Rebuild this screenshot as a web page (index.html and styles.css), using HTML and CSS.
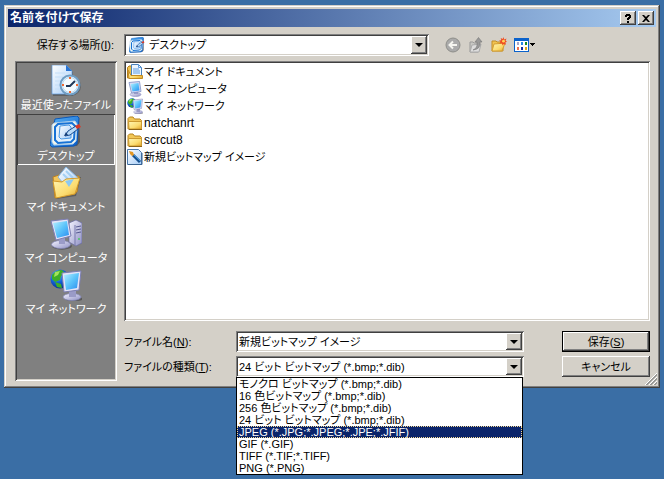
FILE: index.html
```html
<!DOCTYPE html>
<html lang="ja">
<head>
<meta charset="utf-8">
<title>名前を付けて保存</title>
<link rel="stylesheet" href="styles.css">
</head>
<body>
<svg class="defs" width="0" height="0" aria-hidden="true">
  <defs>
    <linearGradient id="screen" x1="0" y1="0" x2="1" y2="1"><stop offset="0" stop-color="#b8f0ff"/><stop offset=".5" stop-color="#5cc4fa"/><stop offset="1" stop-color="#2a8cf0"/></linearGradient>
    <linearGradient id="case" x1="0" y1="0" x2="1" y2="1"><stop offset="0" stop-color="#f4f4ff"/><stop offset="1" stop-color="#8f90c4"/></linearGradient>
    <linearGradient id="gold" x1="0" y1="0" x2="1" y2="1"><stop offset="0" stop-color="#fff6b4"/><stop offset=".6" stop-color="#fbdc70"/><stop offset="1" stop-color="#e2a52c"/></linearGradient>
    <linearGradient id="blue" x1="0" y1="0" x2="1" y2="1"><stop offset="0" stop-color="#58b4f8"/><stop offset="1" stop-color="#0a5cc8"/></linearGradient>
    <linearGradient id="paper" x1="0" y1="0" x2="1" y2="1"><stop offset="0" stop-color="#ffffff"/><stop offset="1" stop-color="#a4ccf8"/></linearGradient>
    <radialGradient id="globe" cx=".35" cy=".3" r=".75"><stop offset="0" stop-color="#6cc8ff"/><stop offset=".5" stop-color="#1464dc"/><stop offset="1" stop-color="#062c88"/></radialGradient>
  </defs>
  <symbol id="recent" viewBox="0 0 32 32">
    <path d="M3 1h14l6 6v24H3z" fill="#444" opacity=".5"/>
    <path d="M2 0h14l6 6v23H2z" fill="url(#paper)" stroke="#5d98dc" stroke-width=".7"/>
    <path d="M16 0v6h6z" fill="#2874d4"/>
    <path d="M5 8h10M5 12h8M5 16h6M5 20h5M5 24h6" stroke="#c4def8"/>
    <circle cx="21" cy="21" r="10" fill="#555" opacity=".7"/>
    <circle cx="20" cy="20" r="9.5" fill="#e4f4ff" stroke="#6f9dc4" stroke-width="2"/>
    <circle cx="20" cy="20" r="7.5" fill="#f4fbff" stroke="#b8d8f0"/>
    <path d="M20 12v2M20 26v2M12 20h2M26 20h2" stroke="#f06830" stroke-width="2"/>
    <path d="M16 21h4l5-5" fill="none" stroke="#203858" stroke-width="2"/>
  </symbol>
  <symbol id="desktop" viewBox="0 0 32 32">
    <path d="M4 5 29 2l1 24-3 4-23 1-3-3z" fill="#333" opacity=".5"/>
    <path d="M5 3 27 0l2 2-2 26-3 2-22 1-2-2z" fill="url(#blue)" stroke="#0b58b8"/>
    <path d="M4 7 25 5l2 3-1 17-3 3-19 1-2-3V9z" fill="#f4f6ec" stroke="#a8ccec"/>
    <path d="M8 8 22 7l3 3-1 13-3 3-13 1-3-3V11z" fill="#e2f0fc" stroke="#1672d6" stroke-width="2"/>
    <path d="M10 10l9-1 2 2v11l-10 1-2-2z" fill="url(#paper)" stroke="#4a98e4"/>
    <path d="M15 20l3-5 8-5 2 3-8 6z" fill="#b8daf8" stroke="#184c90"/>
    <path d="M25 10l4-2 2 3-4 2z" fill="#d83828"/><path d="M14 20l2-4 2 3z" fill="#153e78"/>
  </symbol>
  <symbol id="documents" viewBox="0 0 32 32">
    <path d="M4 11 31 10l-5 19-20 3z" fill="#333" opacity=".45"/>
    <path d="M3 10 9 8l4 2 16-1-2 16-22 6z" fill="#f3c65b" stroke="#ba8022"/>
    <path d="M16 0 28 11 18 22 8 10z" fill="url(#paper)" stroke="#86b7e4"/>
    <path d="M16 4l7 7M13 7l7 7" stroke="#a4d0f4" stroke-width="2"/>
    <path d="M3 14 12 15l4-3 14-1-5 16-19 4z" fill="url(#gold)" stroke="#d39a2a"/>
    <path d="M15 14l9-2-5 8z" fill="#8bc8f3"/>
  </symbol>
  <symbol id="computer" viewBox="0 0 32 32">
    <path d="M19 5l7-3 6 3v20l-6 3-7-4z" fill="url(#case)" stroke="#6668a0" stroke-width=".7"/>
    <path d="M25 7v20" stroke="#7678ad"/><path d="M26 9l5-1M26 12l5-1M26 15l5-1" stroke="#575b91"/><circle cx="29" cy="21" r="1" fill="#4bc861"/>
    <ellipse cx="12" cy="28" rx="10" ry="3.7" fill="#333" opacity=".5"/>
    <ellipse cx="11" cy="26.500" rx="9.500" ry="4" fill="url(#case)" stroke="#8385b6" stroke-width=".7"/>
    <path d="M9 20h6v6H9z" fill="#9a9bc7"/>
    <path d="M1 3 18 1l3 17-15 4z" fill="#e4e3f7" stroke="#7c7eb2"/>
    <path d="M3 5 17 3l2 14-12 3z" fill="url(#screen)"/>
  </symbol>
  <symbol id="monitor" viewBox="0 0 16 16">
    <ellipse cx="8.500" cy="13.500" rx="5.500" ry="2" fill="url(#case)" stroke="#8385b6" stroke-width=".5"/>
    <path d="M7 10h4v3H7z" fill="#9a9bc7"/>
    <path d="M2 1.500 12.500.5l1.500 10-9.500 1.500z" fill="#dcdcf4" stroke="#7c8ec2" stroke-width=".8"/>
    <path d="M3.500 3 11.500 2l1 7.500-7 1z" fill="url(#screen)"/>
  </symbol>
  <symbol id="network" viewBox="0 0 32 32">
    <circle cx="10" cy="10" r="9.500" fill="url(#globe)"/>
    <path d="M2 6Q6 1 12 1l3 3-4 3-1 4-5 2-3-3zM5 13l6 2 1 4-5-1z" fill="#3cae28"/>
    <path d="M5 3l5-1-2 4-4 2z" fill="#a3e45c"/>
    <ellipse cx="24" cy="30" rx="9" ry="2" fill="#333" opacity=".5"/>
    <ellipse cx="22" cy="28" rx="9" ry="3.500" fill="url(#case)" stroke="#8385b6" stroke-width=".7"/>
    <path d="M19 22h7v6h-7z" fill="#9a9bc7"/>
    <path d="M12 4 31 2l-2 19-15 2z" fill="#e4e3f7" stroke="#7c7eb2"/>
    <path d="M14 6 29 4l-2 15-11 2z" fill="url(#screen)"/>
  </symbol>
  <symbol id="folder" viewBox="0 0 16 16">
    <path d="M1 3.500 2.500 2H6l1.500 2H13l1.500 1.500V14H1z" fill="#f2c757" stroke="#b7841f"/>
    <path d="M1.500 6.500h13V14H2z" fill="url(#gold)" stroke="#cc9a31"/>
    <path d="M2 14.500h13" stroke="#8d6417"/>
  </symbol>
  <symbol id="docfolder" viewBox="0 0 16 16">
    <path d="M.5 3.500 2 2h4v12H.5z" fill="#efc14c" stroke="#b57f1c"/>
    <path d="M4.500.5h7l3 3V12h-10z" fill="#edf6ff" stroke="#4b82ba"/>
    <path d="M11.500.5v3h3M6 5h6M6 7h7M6 9h7" fill="none" stroke="#5c9ce2"/>
    <path d="M1 6l3 5.500h11.500v3H2z" fill="url(#gold)" stroke="#c38b21"/>
  </symbol>
  <symbol id="bitmap" viewBox="0 0 16 16">
    <path d="M.5.5h11l3 3v12H.5z" fill="url(#paper)" stroke="#4b78ab"/>
    <path d="M15 4v11.500H1" fill="none" stroke="#376392"/>
    <path d="m6 6 7 7" stroke="#17508e" stroke-width="3"/><path d="m7 6 6 6" stroke="#3c94dc"/>
    <path d="M2 2l4 1 1 3-2 1-2-2z" fill="#e39724"/>
  </symbol>
</svg>

<main class="dialog">
  <header class="titlebar">
    <h1>名前を付けて保存</h1>
    <button class="caption" type="button" aria-label="ヘルプ"><svg width="8" height="9" viewBox="0 0 8 9"><path d="M1 1h1V0h4v1h1v3H6v1H5v1H3V4h1V3h1V2H3v1H1zM3 7h2v2H3z"/></svg></button>
    <button class="caption close" type="button" aria-label="閉じる"><svg width="8" height="7" viewBox="0 0 8 7"><path d="M0 0h2l2 2 2-2h2L5 3.500 8 7H6L4 5 2 7H0l3-3.500z"/></svg></button>
  </header>

  <form class="content">
    <label class="look-label" for="look">保存する場所(<u>I</u>):</label>
    <div class="toolbar">
      <div class="combo look">
        <svg class="small" viewBox="0 0 32 32"><use href="#desktop"/></svg>
        <select id="look"><option>デスクトップ</option></select>
        <span class="arrow"></span>
      </div>
      <div class="tools">
        <button type="button" aria-label="戻る" disabled><svg width="16" height="16" viewBox="0 0 16 16"><circle cx="8" cy="8" r="7" fill="#aaa" stroke="#8e8e8a"/><path d="M12 8H5M8 4.500 4.500 8 8 11.500" fill="none" stroke="#f5f5f0" stroke-width="2"/></svg></button>
        <button type="button" aria-label="上へ" disabled><svg width="16" height="16" viewBox="0 0 16 16"><path d="M2 5h3l1 1h4v9H2z" fill="#c8c8c4" stroke="#999"/><path d="m4 8 9-1-2 8H2z" fill="#ddd" stroke="#aaa"/><path d="M5 13q5-2 4-8H7l3.500-4.500L14 5h-2q1 7-7 8z" fill="#999" stroke="#777" stroke-width=".6"/></svg></button>
        <button type="button" aria-label="新しいフォルダ"><svg width="16" height="16" viewBox="0 0 16 16"><path d="M1 4h4l1 1h6v9H1z" fill="#f2c450" stroke="#c18d27"/><path d="m3 7 11-1-3 8H1z" fill="url(#gold)" stroke="#d49e32"/><path d="m12.500 0 .7 2.400 2.300-.9-.9 2.300 1.400 1-1.700.8.700 2.200-2.200-.9-1.200 1.600-.7-2.200-2.300.5.900-2.100L8 3.500l2.300-.3-.6-2.200 2 1.100z" fill="#f04b21"/><circle cx="12.500" cy="4.200" r="1.400" fill="#ffd456"/></svg></button>
        <button type="button" class="views" aria-label="表示"><svg width="22" height="16" viewBox="0 0 22 16"><path d="M0 1h15v14H0z" fill="#0b62cb"/><path d="M1 4h13v10H1z" fill="#fff"/><path d="M3 5h2v3H3z" fill="#a9a4c8"/><path d="M7 5h2v3H7z" fill="#278ae5"/><path d="M11 5h2v3h-2z" fill="#158a23"/><path d="M3 10h2v3H3z" fill="#ed7151"/><path d="M7 10h2v3H7z" fill="#112ba0"/><path d="M11 10h2v3h-2z" fill="#dca511"/><path d="M16 6h5v1h-1v1h-1v1h-1V8h-1V7h-1z" fill="#000"/></svg></button>
      </div>
    </div>

    <nav class="places">
      <button type="button"><svg viewBox="0 0 32 32"><use href="#recent"/></svg>最近使ったファイル</button>
      <button type="button" class="active"><svg viewBox="0 0 32 32"><use href="#desktop"/></svg>デスクトップ</button>
      <button type="button"><svg viewBox="0 0 32 32"><use href="#documents"/></svg>マイ ドキュメント</button>
      <button type="button"><svg viewBox="0 0 32 32"><use href="#computer"/></svg>マイ コンピュータ</button>
      <button type="button"><svg viewBox="0 0 32 32"><use href="#network"/></svg>マイ ネットワーク</button>
    </nav>

    <div class="main">
      <ul class="files">
        <li><svg class="small" viewBox="0 0 16 16"><use href="#docfolder"/></svg>マイ ドキュメント</li>
        <li><svg class="small" viewBox="0 0 16 16"><use href="#monitor"/></svg>マイ コンピュータ</li>
        <li><svg class="small" viewBox="0 0 32 32"><use href="#network"/></svg>マイ ネットワーク</li>
        <li class="latin"><svg class="small" viewBox="0 0 16 16"><use href="#folder"/></svg>natchanrt</li>
        <li class="latin"><svg class="small" viewBox="0 0 16 16"><use href="#folder"/></svg>scrcut8</li>
        <li><svg class="small" viewBox="0 0 16 16"><use href="#bitmap"/></svg>新規ビットマップ イメージ</li>
      </ul>
      <div class="fields">
        <label for="name">ファイル名(<u>N</u>):</label>
        <div class="combo"><input id="name" type="text" value="新規ビットマップ イメージ"><span class="arrow"></span></div>
        <button class="push default" type="submit">保存(<u>S</u>)</button>
        <label for="type">ファイルの種類(<u>T</u>):</label>
        <div class="combo">
          <select id="type"><option>24 ビット ビットマップ (*.bmp;*.dib)</option></select><span class="arrow"></span>
          <ul class="menu" role="listbox" aria-label="ファイルの種類">
            <li role="option">モノクロ ビットマップ (*.bmp;*.dib)</li>
            <li role="option">16 色ビットマップ (*.bmp;*.dib)</li>
            <li role="option">256 色ビットマップ (*.bmp;*.dib)</li>
            <li role="option">24 ビット ビットマップ (*.bmp;*.dib)</li>
            <li role="option" aria-selected="true">JPEG (*.JPG;*.JPEG;*.JPE;*.JFIF)</li>
            <li role="option">GIF (*.GIF)</li>
            <li role="option">TIFF (*.TIF;*.TIFF)</li>
            <li role="option">PNG (*.PNG)</li>
          </ul>
        </div>
        <button class="push" type="button">キャンセル</button>
      </div>
    </div>
  </form>
  <svg class="grip" width="12" height="12" viewBox="0 0 12 12"><path d="M0 12 12 0M4 12l8-8M8 12l4-4" stroke="#fff"/><path d="M1 12 12 1M2 12 12 2M5 12l7-7M6 12l6-6M9 12l3-3M10 12l2-2" stroke="#808080" stroke-width=".7"/></svg>
</main>
</body>
</html>
```

FILE: styles.css
```css
* { box-sizing: border-box; }
body, button, input, select {
  font-family: "Liberation Sans", "Noto Sans CJK JP", sans-serif;
  font-size: 11px;
  line-height: 16px;
  font-feature-settings: "palt";
  color: #000;
}
body { margin: 0; min-height: 100vh; padding: 5px 4px; background: #3a6ea5; }
button, input, select { margin: 0; padding: 0; border: 0; border-radius: 0; background: none; outline: 0; }
ul { list-style: none; margin: 0; padding: 0; }
svg { display: block; flex: none; }
.defs { position: absolute; }
.small { width: 16px; height: 16px; }
u { text-underline-offset: 1px; }

.dialog {
  position: relative;
  padding: 4px;
  background: #d4d0c8;
  box-shadow: inset -1px -1px #404040, inset 1px 1px #d4d0c8, inset -2px -2px #808080, inset 2px 2px #fff;
}
.titlebar {
  display: flex;
  align-items: center;
  height: 18px;
  padding: 0 2px;
  background: linear-gradient(to right, #0a246a, #a6caf0);
}
.titlebar h1 { flex: 1; margin: 0; font-size: 12px; line-height: 18px; color: #fff; }
.caption {
  display: flex;
  align-items: center;
  justify-content: center;
  width: 16px;
  height: 14px;
  background: #d4d0c8;
  box-shadow: inset -1px -1px #404040, inset 1px 1px #fff, inset -2px -2px #808080;
}
.close { margin-left: 2px; }

.content {
  display: grid;
  grid-template-columns: 102px minmax(0, 1fr);
  column-gap: 7px;
  row-gap: 5px;
  padding: 7px 6px 3px 7px;
}
.look-label { align-self: center; padding-right: 3px; text-align: right; white-space: nowrap; }
.toolbar { display: flex; align-items: center; gap: 16px; }
.tools { display: flex; gap: 7px; }
.combo {
  position: relative;
  display: flex;
  align-items: center;
  height: 21px;
  padding: 2px;
  background: #fff;
  box-shadow: inset 1px 1px #808080, inset -1px -1px #fff, inset 2px 2px #404040, inset -2px -2px #d4d0c8;
}
.look { flex: 0 1 305px; height: 22px; padding-left: 5px; }
.combo select, .combo input { flex: 1; min-width: 0; height: 16px; appearance: none; }
.look select { padding-left: 4px; }
.arrow {
  display: flex;
  align-items: center;
  justify-content: center;
  align-self: stretch;
  width: 16px;
  background: #d4d0c8;
  box-shadow: inset -1px -1px #404040, inset 1px 1px #fff, inset -2px -2px #808080;
}
.arrow::before { content: ""; border: 4px solid transparent; border-top-color: #000; border-bottom: 0; }

.places {
  padding: 2px;
  background: #808080;
  box-shadow: inset 1px 1px #808080, inset -1px -1px #fff, inset 2px 2px #404040, inset -2px -2px #d4d0c8;
}
.places button {
  display: flex;
  flex-direction: column;
  align-items: center;
  width: 100%;
  height: 51px;
  padding-top: 2px;
  color: #fff;
  white-space: nowrap;
}
.places svg { width: 32px; height: 32px; }
.places .active { box-shadow: inset 1px 1px #404040, inset -1px -1px #fff; }

.files {
  height: 260px;
  padding: 2px 3px;
  background: #fff;
  box-shadow: inset 1px 1px #808080, inset -1px -1px #fff, inset 2px 2px #404040, inset -2px -2px #d4d0c8;
}
.files li { display: flex; align-items: center; gap: 1px; height: 17px; }
.files .latin { font-size: 12px; }

.fields {
  display: grid;
  grid-template-columns: 112px minmax(0, 288px) 1fr 88px;
  align-items: center;
  row-gap: 4px;
  padding: 10px 0 4px;
}
.fields .combo { padding-left: 3px; }
.push {
  grid-column: 4;
  height: 21px;
  background: #d4d0c8;
  box-shadow: inset -1px -1px #404040, inset 1px 1px #fff, inset -2px -2px #808080;
}
.default { border: 1px solid #000; }

.menu {
  position: absolute;
  top: 100%;
  left: 0;
  right: 1px;
  z-index: 1;
  border: 1px solid #000;
  background: #fff;
}
.menu li { height: 12px; padding-left: 2px; line-height: 12px; white-space: nowrap; }
.menu [aria-selected] { background: #0a246a; color: #fff; outline: 1px dotted #f5db95; outline-offset: -1px; }
.grip { position: absolute; right: 3px; bottom: 3px; }
```
